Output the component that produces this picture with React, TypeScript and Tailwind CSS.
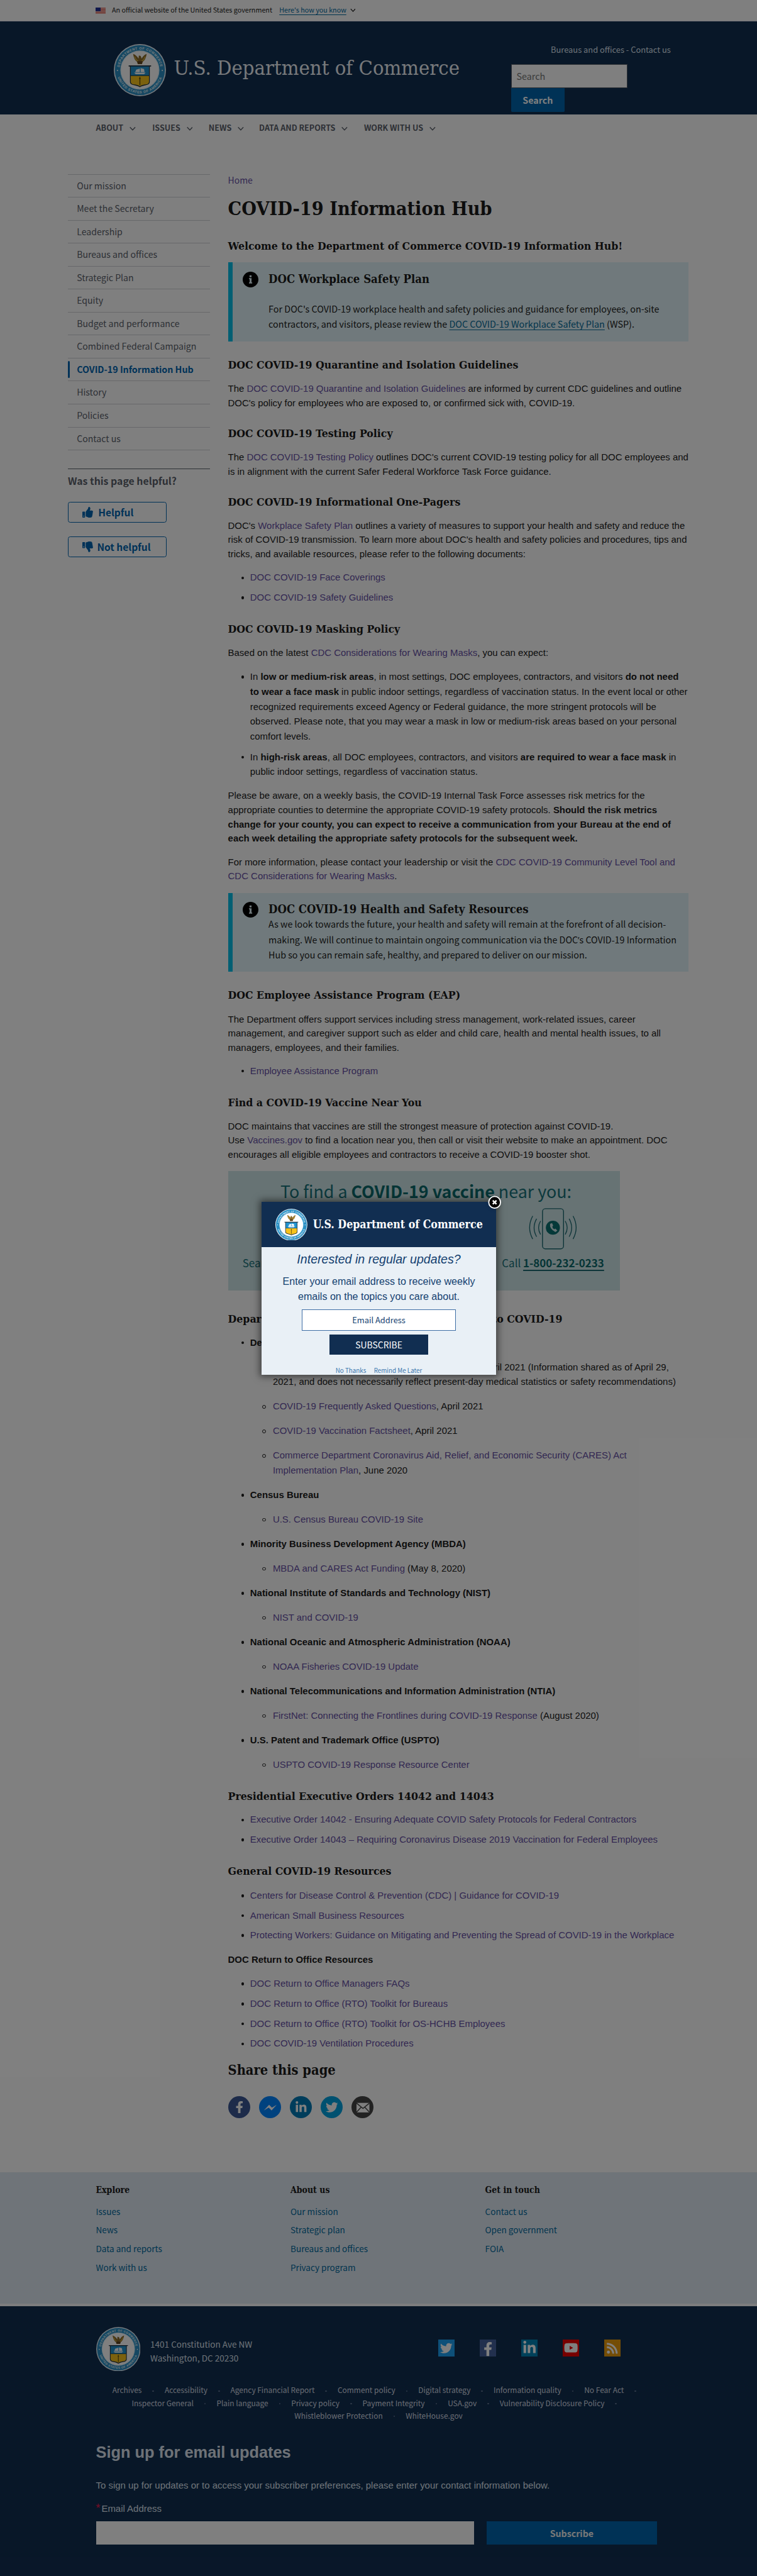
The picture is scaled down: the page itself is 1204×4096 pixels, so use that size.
import type { ReactNode } from "react";
import { FaFacebookF, FaLinkedinIn, FaTwitter, FaYoutube, FaRss, FaThumbsUp, FaThumbsDown } from "react-icons/fa";

function Seal({ className, id }: { className: string; id: string }) {
  return (
    <svg viewBox="0 0 100 100" className={className}>
      <circle cx="50" cy="50" r="50" fill="#e9f3fa" />
      <circle cx="50" cy="50" r="48" fill="#2a8fc4" />
      <circle cx="50" cy="50" r="37.5" fill="#d5ecf8" />
      <circle cx="50" cy="50" r="36" fill="#ffffff" />
      <defs>
        <path id={id + "t"} d="M10.5 50 A39.5 39.5 0 0 1 89.5 50" />
        <path id={id + "b"} d="M5.5 50 A44.5 44.5 0 0 0 94.5 50" />
      </defs>
      <g fill="#e6f4fb" fontSize="6.600" fontWeight="700" letterSpacing="0.700" fontFamily="Liberation Sans, sans-serif" textAnchor="middle">
        <text>
          <textPath href={"#" + id + "t"} startOffset="50%">DEPARTMENT OF COMMERCE</textPath>
        </text>
        <text>
          <textPath href={"#" + id + "b"} startOffset="50%">UNITED STATES OF AMERICA</textPath>
        </text>
      </g>
      <circle cx="7" cy="50.5" r="1.2" fill="#ffffff" />
      <circle cx="93" cy="50.5" r="1.2" fill="#ffffff" />
      <path d="M37 19 Q39 31 44.500 34 L46 38.500 H54 L55.500 34 Q61 31 63 19 Q57 21 53.500 28 L51.500 23 L48 22 L47.500 28 Q43 21 37 19 Z" fill="#8a6a2a" />
      <path d="M40 24 Q42 31 47 33 M60 24 Q58 31 53 33" stroke="#d9b23a" strokeWidth="1.5" fill="none" />
      <path d="M45 33 H55 L54 38 H46 Z" fill="#5d4320" />
      <path d="M28.500 41 H71.500 V43 H69 V73 Q69 78 61 79 Q53 80.500 50 83 Q47 80.500 39 79 Q31 78 31 73 V43 H28.500 Z" fill="#1c2f3c" />
      <path d="M32.500 43 H67.500 V61 H32.500 Z" fill="#2293cf" />
      <path d="M32.500 61 H67.500 V72.500 Q67 77 60.500 77.500 Q53 78.500 50 81 Q47 78.500 39.500 77.500 Q33 77 32.500 72.500 Z" fill="#f6c21c" />
      <path d="M39 55 L61 55 L58 58 H42 Z M43 49 L50 47 V54 H41 Z M51.500 46 L58 48 L59 54 H51.500 Z" fill="#ffffff" />
      <path d="M32.500 60.500 H67.500" stroke="#1c2f3c" strokeWidth="1" />
      <path d="M50 63 V79 M48.500 66 H51.500" stroke="#5a4a14" strokeWidth="1.600" />
    </svg>
  );
}

function Flag() {
  return (
    <svg viewBox="0 0 18 12" className="h-[12px] w-[18px]">
      <rect width="18" height="12" fill="#ffffff" />
      <path d="M0 .9H18M0 2.700H18M0 4.500H18M0 6.300H18M0 8.100H18M0 9.900H18M0 11.500H18" stroke="#db4b3d" strokeWidth="1.100" />
      <rect width="9" height="6.500" fill="#1f2f97" />
    </svg>
  );
}

function Chevron({ className }: { className: string }) {
  return (
    <svg viewBox="0 0 11 8" className={className} fill="none" stroke="currentColor" strokeWidth="1.600">
      <path d="M.8 1.500 L5.500 6.500 L10.200 1.500" />
    </svg>
  );
}

const A = ({ children }: { children: ReactNode }) => <a className="text-[#6650a4]">{children}</a>;

function H3({ children, className }: { children: ReactNode; className: string }) {
  return (
    <h3 className={"h-[30px] whitespace-nowrap font-['DejaVu_Serif_Condensed','DejaVu_Serif',serif] text-[19.7px] font-bold leading-[30px] " + className}>
      {children}
    </h3>
  );
}

function P({ children, className }: { children: ReactNode; className: string }) {
  return <p className={"whitespace-nowrap leading-[25.4px] " + className}>{children}</p>;
}

function Li({ children }: { children: ReactNode }) {
  return (
    <li className="flex whitespace-nowrap">
      <span className="ml-[23.500px] mr-[11px] mt-[11.500px] size-[5px] shrink-0 rounded-full bg-[#1b1b1b]" />
      <span>{children}</span>
    </li>
  );
}

function Sub({ children }: { children: ReactNode }) {
  return (
    <li className="flex whitespace-nowrap">
      <span className="ml-[61.500px] mr-[12.500px] mt-[11px] size-[6px] shrink-0 rounded-full border border-[#1b1b1b]" />
      <span>{children}</span>
    </li>
  );
}

function InfoIcon() {
  return (
    <svg viewBox="0 0 28 28" className="ml-[18px] size-[28px] shrink-0">
      <circle cx="14" cy="14" r="14" fill="#000000" />
      <path d="M12.200 6.500h3.600v3.200h-3.600z M11.200 11.500h4.600v7.500h1.200v2h-5.800v-2h1.200v-5.500h-1.200z" fill="#e1f3f8" />
    </svg>
  );
}

function Messenger() {
  return (
    <svg viewBox="0 0 40 40" className="size-[40px]">
      <path d="M8.500 25.500 L18 15.500 L23 20.500 L31.500 15.500 L22.300 25.500 L17.200 20.500 Z" fill="#ffffff" />
    </svg>
  );
}

function Mail() {
  return (
    <svg viewBox="0 0 40 40" className="size-[40px]">
      <rect x="9" y="12" width="23" height="17" fill="#ffffff" />
      <path d="M9 12.500 L20.500 22 L32 12.500 M9 28.500 L17 20 M32 28.500 L24 20" stroke="#444444" strokeWidth="1.700" fill="none" />
    </svg>
  );
}

const nav: [string, string][] = [
  ["ABOUT", "w-[100.500px]"],
  ["ISSUES", "w-[100.500px]"],
  ["NEWS", "w-[90px]"],
  ["DATA AND REPORTS", "w-[187px]"],
  ["WORK WITH US", "w-[130px]"],
];

const side = [
  "Our mission", "Meet the Secretary", "Leadership", "Bureaus and offices", "Strategic Plan", "Equity",
  "Budget and performance", "Combined Federal Campaign", "COVID-19 Information Hub", "History", "Policies", "Contact us",
];

const footCols = [
  { title: "Explore", links: ["Issues", "News", "Data and reports", "Work with us"] },
  { title: "About us", links: ["Our mission", "Strategic plan", "Bureaus and offices", "Privacy program"] },
  { title: "Get in touch", links: ["Contact us", "Open government", "FOIA"] },
];

const legal = [
  ["Archives", "Accessibility", "Agency Financial Report", "Comment policy", "Digital strategy", "Information quality", "No Fear Act"],
  ["Inspector General", "Plain language", "Privacy policy", "Payment Integrity", "USA.gov", "Vulnerability Disclosure Policy"],
  ["Whistleblower Protection", "WhiteHouse.gov"],
];

function Header() {
  return (
    <>
      <div className="flex h-[38px] items-start border-b border-[#efeaf4] bg-white pl-[170px] text-[12.06px] leading-[20px]">
        <div className="mt-[13px]"><Flag /></div>
        <span className="ml-[11.500px] mt-[7.500px] w-[298.500px] whitespace-nowrap">An official website of the United States government</span>
        <span className="mt-[7.500px] w-[126px] whitespace-nowrap text-[#00699e] underline underline-offset-[3px]">Here&apos;s how you know</span>
        <Chevron className="mt-[15px] h-[7px] w-[10px]" />
      </div>
      <header className="flex h-[166px] bg-[#112e51] text-white">
        <Seal id="hd" className="ml-[203px] mt-[40px] size-[93px]" />
        <h1 className="ml-[14px] mt-[60px] w-[601px] whitespace-nowrap font-['DejaVu_Serif_Condensed','DejaVu_Serif',serif] text-[36.5px] leading-[48px] text-[#eef2f6]">
          U.S. Department of Commerce
        </h1>
        <div className="w-[285px]">
          <div className="mt-[38px] h-[24px] whitespace-nowrap text-right text-[14.43px] leading-[24px] text-[#dce4ef]">Bureaus and offices - Contact us</div>
          <div className="mt-[14px] h-[43px] w-[208px] border border-[#5b616b] bg-white pl-[9px] text-[16px] leading-[40px] text-[#757575]">Search</div>
          <button className="block h-[43px] w-[96px] rounded-b-[2px] bg-[#0065ad] text-center text-[16px] font-bold leading-[41px]">Search</button>
        </div>
      </header>
      <nav className="flex h-[48px] pl-[171px] pt-[11px] text-[14.1px] font-bold leading-[24px] text-[#5b616b]">
        {nav.map(([t, w]) => (
          <div key={t} className={"flex shrink-0 items-start whitespace-nowrap " + w}>
            <span>{t}</span>
            <Chevron className="ml-[11px] mt-[10px] h-[8px] w-[11px]" />
          </div>
        ))}
      </nav>
    </>
  );
}

function Sidebar() {
  return (
    <aside className="ml-[121px] w-[254px] shrink-0 text-[#5b616b]">
      <ul className="mt-[58px] border-b border-[#cfd1d4] text-[15.8px] leading-[39px]">
        {side.map((s) =>
          s.startsWith("COVID") ? (
            <li key={s} className="flex h-[40.980px] items-center whitespace-nowrap border-t border-[#cfd1d4] text-[16px] font-bold text-[#0065b0]">
              <span className="h-[31px] w-[4px] rounded-full bg-[#0065b0]" />
              <span className="ml-[12px]">{s}</span>
            </li>
          ) : (
            <li key={s} className="h-[40.980px] whitespace-nowrap border-t border-[#cfd1d4] pl-[16px]">{s}</li>
          ),
        )}
      </ul>
      <div className="mt-[32px] border-t border-[#5b616b]" />
      <div className="mt-[8px] whitespace-nowrap text-[17.77px] font-bold leading-[28px]">Was this page helpful?</div>
      <button className="mt-[23.300px] flex h-[36.500px] w-[176px] items-center rounded-[4px] border-2 border-[#0065b0] pl-[25px] text-[17.4px] font-bold leading-[30px] text-[#0065b0]">
        <FaThumbsUp className="size-[19px]" />
        <span className="ml-[9px]">Helpful</span>
      </button>
      <button className="mt-[25.200px] flex h-[36.500px] w-[176px] items-center rounded-[4px] border-2 border-[#0065b0] pl-[25px] text-[17.4px] font-bold leading-[30px] text-[#0065b0]">
        <FaThumbsDown className="size-[19px]" />
        <span className="ml-[7px] whitespace-nowrap">Not helpful</span>
      </button>
    </aside>
  );
}

function PhoneIcon() {
  return (
    <svg viewBox="0 0 86 74" className="h-[74px] w-[86px]" fill="none" stroke="#1c6a72">
      <rect x="24.500" y="1" width="37.500" height="71.500" rx="5" strokeWidth="1.600" />
      <circle cx="43" cy="35" r="12.500" fill="#0a7070" stroke="none" />
      <path d="M38 28 q-1.500 9 9.500 14.500 l3.500 -2.500 l-3.500 -3.500 l-2 1.200 q-3.500 -2 -3.500 -5 l1.500 -1.500 l-2 -4.500 z" fill="#cfe6e8" stroke="none" />
      <path d="M21 23 q-7 12 0 24 M14 19 q-9 16 0 32 M7 14 q-11 21 0 41 M65 23 q7 12 0 24 M72 19 q9 16 0 32 M79 14 q11 21 0 41" strokeWidth="1.500" />
    </svg>
  );
}

function Content() {
  return (
    <main className="ml-[31.500px] w-[821px] shrink-0 font-['Liberation_Sans',Arial,sans-serif] text-[16.77px] text-[#1b1b1b]">
      <div className="mt-[57px] font-['Noto_Sans_CJK_SC',sans-serif] text-[15.64px] leading-[24px]"><A>Home</A></div>
      <h1 className="mt-[16px] whitespace-nowrap font-['DejaVu_Serif_Condensed','DejaVu_Serif',serif] text-[33.96px] font-bold leading-[48px]">COVID-19 Information Hub</h1>
      <H3 className="mt-[26.300px]">Welcome to the Department of Commerce COVID-19 Information Hub!</H3>

      <section className="mt-[14.700px] flex h-[141.300px] border-l-8 border-[#02bfe7] bg-[#e1f3f8]">
        <div className="mt-[16px]"><InfoIcon /></div>
        <div className="ml-[18.500px]">
          <H3 className="mt-[15px] text-[20.64px]!">DOC Workplace Safety Plan</H3>
          <p className="mt-[24.500px] whitespace-nowrap font-['Noto_Sans_CJK_SC',sans-serif] text-[16.09px] leading-[26.7px]">
            For DOC&apos;s COVID-19 workplace health and safety policies and guidance for employees, on-site<br />
            contractors, and visitors, please review the <a className="text-[#046b99] underline underline-offset-[3px]">DOC COVID-19 Workplace Safety Plan</a> (WSP).
          </p>
        </div>
      </section>

      <H3 className="mt-[26px]">DOC COVID-19 Quarantine and Isolation Guidelines</H3>
      <P className="mt-[15.500px]">
        The <A>DOC COVID-19 Quarantine and Isolation Guidelines</A> are informed by current CDC guidelines and outline<br />
        DOC&apos;s policy for employees who are exposed to, or confirmed sick with, COVID-19.
      </P>
      <H3 className="mt-[26.300px]">DOC COVID-19 Testing Policy</H3>
      <P className="mt-[15px]">
        The <A>DOC COVID-19 Testing Policy</A> outlines DOC&apos;s current COVID-19 testing policy for all DOC employees and<br />
        is in alignment with the current Safer Federal Workforce Task Force guidance.
      </P>
      <H3 className="mt-[26.600px]">DOC COVID-19 Informational One-Pagers</H3>
      <P className="mt-[14.200px]">
        DOC&apos;s <A>Workplace Safety Plan</A> outlines a variety of measures to support your health and safety and reduce the<br />
        risk of COVID-19 transmission. To learn more about DOC&apos;s health and safety policies and procedures, tips and<br />
        tricks, and available resources, please refer to the following documents:
      </P>
      <ul className="mt-[15.500px] space-y-[8.900px] leading-[26.7px]">
        <Li><A>DOC COVID-19 Face Coverings</A></Li>
        <Li><A>DOC COVID-19 Safety Guidelines</A></Li>
      </ul>
      <H3 className="mt-[27.800px]">DOC COVID-19 Masking Policy</H3>
      <P className="mt-[15.800px]">Based on the latest <A>CDC Considerations for Wearing Masks</A>, you can expect:</P>
      <ul className="mt-[15.600px] space-y-[9.500px] leading-[26.7px]">
        <Li>
          In <b>low or medium-risk areas</b>, in most settings, DOC employees, contractors, and visitors <b>do not need</b><br />
          <b>to wear a face mask</b> in public indoor settings, regardless of vaccination status. In the event local or other<br />
          recognized requirements exceed Agency or Federal guidance, the more stringent protocols will be<br />
          observed. Please note, that you may wear a mask in low or medium-risk areas based on your personal<br />
          comfort levels.
        </Li>
        <Li>
          In <b>high-risk areas</b>, all DOC employees, contractors, and visitors <b>are required to wear a face mask</b> in<br />
          public indoor settings, regardless of vaccination status.
        </Li>
      </ul>
      <P className="mt-[17px]">
        Please be aware, on a weekly basis, the COVID-19 Internal Task Force assesses risk metrics for the<br />
        appropriate counties to determine the appropriate COVID-19 safety protocols. <b>Should the risk metrics<br />
        change for your county, you can expect to receive a communication from your Bureau at the end of<br />
        each week detailing the appropriate safety protocols for the subsequent week.</b>
      </P>
      <P className="mt-[16.600px]">
        For more information, please contact your leadership or visit the <A>CDC COVID-19 Community Level Tool and<br />
        CDC Considerations for Wearing Masks</A>.
      </P>

      <section className="mt-[16.400px] flex h-[141px] border-l-8 border-[#02bfe7] bg-[#e1f3f8]">
        <div className="mt-[16px]"><InfoIcon /></div>
        <div className="ml-[18.500px]">
          <H3 className="mt-[15.300px] text-[20.64px]!">DOC COVID-19 Health and Safety Resources</H3>
          <p className="mt-[-3px] whitespace-nowrap font-['Noto_Sans_CJK_SC',sans-serif] text-[16px] leading-[27px]">
            As we look towards the future, your health and safety will remain at the forefront of all decision-<br />
            making. We will continue to maintain ongoing communication via the DOC<span className="font-['Open_Sans',sans-serif] leading-none">’</span>s COVID-19 Information<br />
            Hub so you can remain safe, healthy, and prepared to deliver on our mission.
          </p>
        </div>
      </section>

      <H3 className="mt-[26.800px]">DOC Employee Assistance Program (EAP)</H3>
      <P className="mt-[15.300px]">
        The Department offers support services including stress management, work-related issues, career<br />
        management, and caregiver support such as elder and child care, health and mental health issues, to all<br />
        managers, employees, and their families.
      </P>
      <ul className="mt-[14.500px] leading-[26.7px]">
        <Li><A>Employee Assistance Program</A></Li>
      </ul>
      <H3 className="mt-[29.100px]">Find a COVID-19 Vaccine Near You</H3>
      <P className="mt-[14px]">
        DOC maintains that vaccines are still the strongest measure of protection against COVID-19.<br />
        Use <A>Vaccines.gov</A> to find a location near you, then call or visit their website to make an appointment. DOC<br />
        encourages all eligible employees and contractors to receive a COVID-19 booster shot.
      </P>

      <section className="mt-[15.900px] h-[213.500px] w-[699px] bg-[#cfe6e8] font-['Noto_Sans_CJK_SC',sans-serif] text-[#17727a]">
        <div className="h-[66px] whitespace-nowrap pl-[93.500px] pt-[14px] text-[30.1px] leading-[44px]">
          To find a <b className="text-[#0a6a6c]">COVID-19 vaccine</b> near you:
        </div>
        <div className="flex h-[74px] pl-[536.500px]"><PhoneIcon /></div>
        <div className="flex h-[40px] items-start whitespace-nowrap pl-[26px] pt-[7px] text-[19px] leading-[34px]">
          <span className="w-[462.500px]">Search <b className="text-[#0a6a6c]">vaccines.gov</b></span>
          <span>Call <b className="text-[#0a6a6c] underline decoration-[#1c6a72] decoration-2 underline-offset-[5px]">1-800-232-0233</b></span>
        </div>
      </section>

      <H3 className="mt-[35.500px]">Department of Commerce Information Related to COVID-19</H3>
      <ul className="mt-[13.500px] space-y-[17px] leading-[26.7px]">
        <Li><b>Department of Commerce</b></Li>
        <Sub>
          <span className="inline-block w-[374.800px]"><A>Department of Commerce COVID-19 Updates</A>,</span>April 2021 (Information shared as of April 29,<br />
          2021, and does not necessarily reflect present-day medical statistics or safety recommendations)
        </Sub>
        <Sub><A>COVID-19 Frequently Asked Questions</A>, April 2021</Sub>
        <Sub><A>COVID-19 Vaccination Factsheet</A>, April 2021</Sub>
        <Sub>
          <A>Commerce Department Coronavirus Aid, Relief, and Economic Security (CARES) Act<br />
          Implementation Plan</A>, June 2020
        </Sub>
        <Li><b>Census Bureau</b></Li>
        <Sub><A>U.S. Census Bureau COVID-19 Site</A></Sub>
        <Li><b>Minority Business Development Agency (MBDA)</b></Li>
        <Sub><A>MBDA and CARES Act Funding</A> (May 8, 2020)</Sub>
        <Li><b>National Institute of Standards and Technology (NIST)</b></Li>
        <Sub><A>NIST and COVID-19</A></Sub>
        <Li><b>National Oceanic and Atmospheric Administration (NOAA)</b></Li>
        <Sub><A>NOAA Fisheries COVID-19 Update</A></Sub>
        <Li><b>National Telecommunications and Information Administration (NTIA)</b></Li>
        <Sub><A>FirstNet: Connecting the Frontlines during COVID-19 Response</A> (August 2020)</Sub>
        <Li><b>U.S. Patent and Trademark Office (USPTO)</b></Li>
        <Sub><A>USPTO COVID-19 Response Resource Center</A></Sub>
      </ul>
      <H3 className="mt-[28.200px]">Presidential Executive Orders 14042 and 14043</H3>
      <ul className="mt-[13.300px] space-y-[8.900px] leading-[26.7px]">
        <Li><A>Executive Order 14042 - Ensuring Adequate COVID Safety Protocols for Federal Contractors</A></Li>
        <Li><A>Executive Order 14043 – Requiring Coronavirus Disease 2019 Vaccination for Federal Employees</A></Li>
      </ul>
      <H3 className="mt-[28.600px]">General COVID-19 Resources</H3>
      <ul className="mt-[14.300px] space-y-[8.800px] leading-[26.7px]">
        <Li><A>Centers for Disease Control &amp; Prevention (CDC) | Guidance for COVID-19</A></Li>
        <Li><A>American Small Business Resources</A></Li>
        <Li><A>Protecting Workers: Guidance on Mitigating and Preventing the Spread of COVID-19 in the Workplace</A></Li>
      </ul>
      <P className="mt-[18px] font-bold">DOC Return to Office Resources</P>
      <ul className="mt-[16.100px] space-y-[8.900px] leading-[26.7px]">
        <Li><A>DOC Return to Office Managers FAQs</A></Li>
        <Li><A>DOC Return to Office (RTO) Toolkit for Bureaus</A></Li>
        <Li><A>DOC Return to Office (RTO) Toolkit for OS-HCHB Employees</A></Li>
        <Li><A>DOC COVID-19 Ventilation Procedures</A></Li>
      </ul>
      <h2 className="mt-[16.800px] font-['DejaVu_Serif_Condensed','DejaVu_Serif',serif] text-[24.33px] font-bold leading-[36px]">Share this page</h2>
      <div className="mt-[27.500px] flex gap-[15px] text-[22px] text-white">
        <span className="flex size-[40px] items-center justify-center rounded-full bg-[#3a5795]"><FaFacebookF /></span>
        <span className="flex size-[40px] items-center justify-center rounded-full bg-[#0084ff]"><Messenger /></span>
        <span className="flex size-[40px] items-center justify-center rounded-full bg-[#007bb6]"><FaLinkedinIn /></span>
        <span className="flex size-[40px] items-center justify-center rounded-full bg-[#00a3e0]"><FaTwitter /></span>
        <span className="flex size-[40px] items-center justify-center rounded-full bg-[#444444]"><Mail /></span>
      </div>
    </main>
  );
}

function Footer() {
  return (
    <footer>
      <div className="flex h-[234px] bg-[#dfe9f2] pl-[171px] pt-[19px]">
        {footCols.map((c) => (
          <div key={c.title} className="w-[347px]">
            <h4 className="mb-[13px] font-['DejaVu_Serif_Condensed','DejaVu_Serif',serif] text-[15.68px] font-bold leading-[26px] text-[#1b1b1b]">{c.title}</h4>
            {c.links.map((l) => (
              <div key={l} className="h-[33.500px] text-[15.2px] leading-[24px] text-[#00699e]">{l}</div>
            ))}
          </div>
        ))}
      </div>
      <div className="h-[5px] bg-[#f8fafd]" />
      <div className="h-[482px] bg-[#112e51] text-[#dce4ef]">
        <div className="flex pl-[171px] pt-[37px]">
          <Seal id="ft" className="size-[79px]" />
          <div className="ml-[18px] mt-[17.500px] w-[513px] whitespace-nowrap text-[15.2px] leading-[25.5px]">
            1401 Constitution Ave NW<br />Washington, DC 20230
          </div>
          <div className="mt-[22.500px] flex gap-[44px] text-[22px] text-white">
            <span className="flex size-[30px] items-center justify-center bg-[#1da1f2]"><FaTwitter /></span>
            <span className="flex size-[30px] items-end justify-center bg-[#44619d] text-[25px]"><FaFacebookF /></span>
            <span className="flex size-[30px] items-center justify-center bg-[#0083b5]"><FaLinkedinIn className="size-[25px]" /></span>
            <span className="flex size-[30px] items-center justify-center bg-[#ee0000]"><FaYoutube className="size-[25px]" /></span>
            <span className="flex size-[30px] items-center justify-center bg-[#e89b0c]"><FaRss /></span>
          </div>
        </div>
        <div className="mt-[22.500px] text-[13.4px] leading-[22.5px] text-[#d3dbe5]">
          {legal.map((row, r) => (
            <ul key={r} className={"flex justify-center whitespace-nowrap " + (r < 2 ? "pr-[15px]" : "")}>
              {row.map((t, i) => (
                <li key={t} className="flex items-center">
                  {t}
                  {(r < 2 || i < row.length - 1) && (
                    <span className={"ml-[19px] mt-[3px] size-[3px] rounded-full bg-[#5f7390] " + (i < row.length - 1 ? "mr-[19px]" : "")} />
                  )}
                </li>
              ))}
            </ul>
          ))}
        </div>
        <div className="pl-[171px] font-['Liberation_Sans',Arial,sans-serif] text-[16.77px]">
          <h3 className="mt-[35px] text-[28.47px] font-bold leading-[40px]">Sign up for email updates</h3>
          <p className="mt-[25.500px] leading-[26px]">To sign up for updates or to access your subscriber preferences, please enter your contact information below.</p>
          <p className="mt-[15.500px] leading-[26px]"><span className="inline-block w-[10px] text-[20px] leading-none text-[#e8184a]">*</span>Email Address</p>
          <div className="mt-[10px] flex">
            <div className="h-[40.500px] w-[674px] bg-white" />
            <button className="ml-[23px] h-[40.500px] w-[303px] bg-[#0065ad] font-['Noto_Sans_CJK_SC',sans-serif] text-[15.96px] font-bold leading-[38px] text-[#f1f1f1]">Subscribe</button>
          </div>
        </div>
      </div>
    </footer>
  );
}

function Modal() {
  return (
    <div className="absolute left-[466px] top-[2142.700px] h-[307.500px] w-[419px] bg-[#e9f0f6] text-center text-[#144170] shadow-[0_0_12px_3px_rgba(0,0,0,0.5)]">
      <div className="flex h-[80px] items-start bg-[#112e51] text-white">
        <Seal id="md" className="ml-[25px] mt-[11.500px] size-[57px]" />
        <span className="ml-[10px] mt-[25px] whitespace-nowrap font-['DejaVu_Serif_Condensed','DejaVu_Serif',serif] text-[19.81px] font-bold leading-[30px]">U.S. Department of Commerce</span>
      </div>
      <div className="h-[103px] whitespace-nowrap font-['Liberation_Sans',Arial,sans-serif]">
        <div className="pt-[6px] text-[21.98px] italic leading-[32px]">Interested in regular updates?</div>
        <div className="mt-[10.500px] text-[18px] leading-[26.6px]">Enter your email address to receive weekly<br />emails on the topics you care about.</div>
      </div>
      <div className="mx-auto mt-[8.500px] h-[37.500px] w-[275px] border border-[#3f6ea5] bg-white text-[14.45px] leading-[35px]">Email Address</div>
      <button className="mx-auto mt-[7.500px] block h-[36px] w-[175px] bg-[#112e51] text-[15.65px] leading-[34px] text-white">SUBSCRIBE</button>
      <div className="flex justify-center gap-[14px] pt-[22.500px] text-[11px] leading-[12px] text-[#3a76ad]">
        <span>No Thanks</span>
        <span>Remind Me Later</span>
      </div>
      <svg viewBox="0 0 24 24" className="absolute right-[-9px] top-[-12px] size-[24px] drop-shadow-md">
        <circle cx="12" cy="12" r="10.500" fill="#000000" stroke="#ffffff" strokeWidth="2" />
        <path d="M8.700 8.700 L15.300 15.300 M15.300 8.700 L8.700 15.300" stroke="#ffffff" strokeWidth="2.800" />
      </svg>
    </div>
  );
}

export default function App() {
  return (
    <div className="relative h-[4591.900px] w-[1349.800px] overflow-hidden bg-white font-['Noto_Sans_CJK_SC',sans-serif] text-[#1b1b1b] [zoom:0.892]">
      <Header />
      <div className="flex h-[3620px]">
        <Sidebar />
        <Content />
      </div>
      <Footer />
      <div className="absolute inset-0 bg-black/50" />
      <Modal />
    </div>
  );
}
